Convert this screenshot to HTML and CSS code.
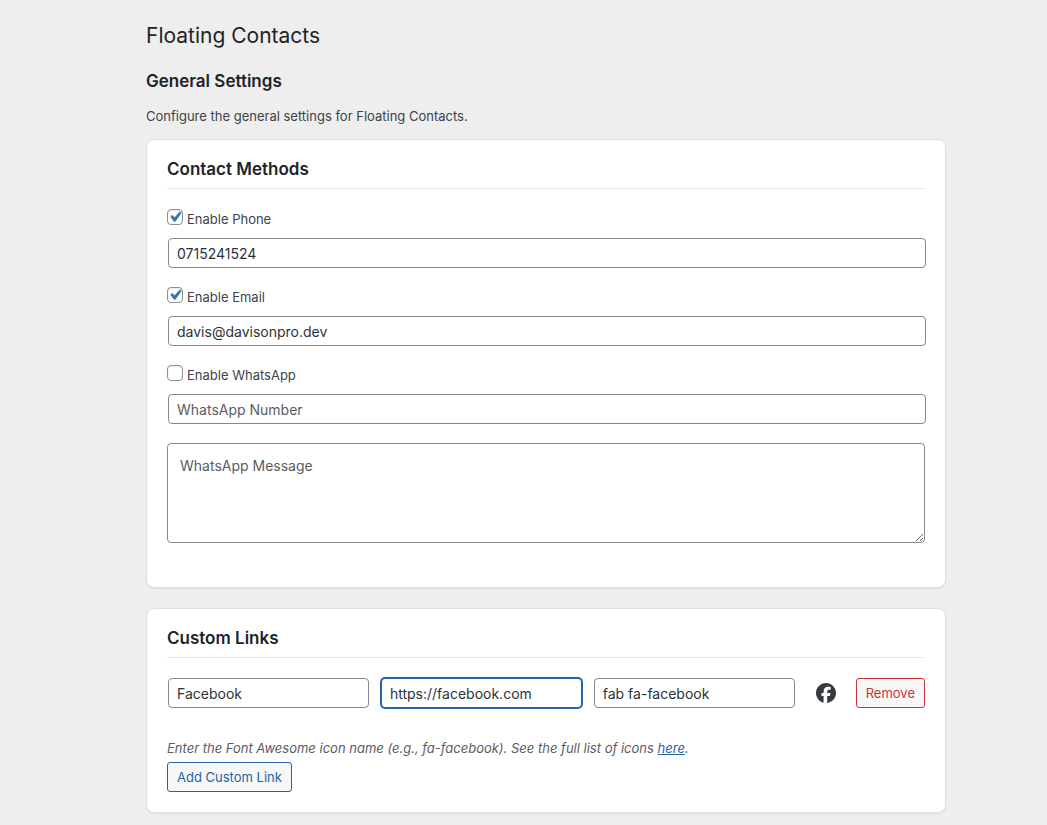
FILE: index.html
```html
<!DOCTYPE html>
<html lang="en">

<head>
  <meta charset="UTF-8" />
  <meta name="viewport" content="width=device-width, initial-scale=1.0" />
  <title>Floating Contacts</title>
  <link rel="stylesheet" href="styles.css">
</head>

<body>
  <main class="wrap">
    <h1>Floating Contacts</h1>
    <h2>General Settings</h2>
    <p class="intro">Configure the general settings for Floating Contacts.</p>

    <form>
      <section class="card contact-methods">
        <h2 class="card-title">Contact Methods</h2>

        <div class="field">
          <label class="toggle"><input type="checkbox" checked /> Enable Phone</label>
          <input type="text" class="text-input" value="0715241524" aria-label="Phone Number" />
        </div>

        <div class="field">
          <label class="toggle"><input type="checkbox" checked /> Enable Email</label>
          <input type="text" class="text-input" value="davis@davisonpro.dev" aria-label="Email Address" />
        </div>

        <div class="field">
          <label class="toggle"><input type="checkbox" /> Enable WhatsApp</label>
          <input type="text" class="text-input" placeholder="WhatsApp Number" aria-label="WhatsApp Number" />
        </div>

        <textarea class="message" placeholder="WhatsApp Message" aria-label="WhatsApp Message"></textarea>
      </section>

      <section class="card">
        <h2 class="card-title">Custom Links</h2>

        <div class="link-row">
          <input type="text" class="text-input" value="Facebook" aria-label="Link Name" />
          <input type="text" class="text-input active" value="https://facebook.com" aria-label="Link URL" />
          <input type="text" class="text-input" value="fab fa-facebook" aria-label="Link Icon" />
          <span class="link-icon">
            <svg viewBox="0 0 512 512" aria-hidden="true">
              <path d="M512 256C512 114.600 397.400 0 256 0S0 114.600 0 256C0 376 82.700 476.800 194.200 504.500V334.200H141.400V256h52.800V222.300c0-87.100 39.400-127.500 125-127.500c16.200 0 44.200 3.200 55.700 6.400V172c-6-.6-16.500-1-29.600-1c-42 0-58.200 15.900-58.200 57.200V256h83.600l-14.400 78.200H287V510.100C413.800 494.800 512 386.900 512 256z" />
            </svg>
          </span>
          <button type="button" class="button button-remove">Remove</button>
        </div>

        <p class="description">Enter the Font Awesome icon name (e.g., fa-facebook). See the full list of icons <a href="#icons">here</a>.</p>
        <button type="button" class="button">Add Custom Link</button>
      </section>
    </form>
  </main>
</body>

</html>
```
FILE: styles.css
```css
* {
  box-sizing: border-box;
}

body {
  margin: 0;
  padding: 12px 0 12px 45px;
  background: #eeeeee;
  color: #3c434a;
  font-family: Inter, "Liberation Sans", sans-serif;
  font-size: 13px;
  line-height: 20px;
}

.wrap {
  max-width: 800px;
  margin: 0 auto;
}

h1 {
  margin: 0;
  padding: 9px 0 4px;
  color: #1d2327;
  font-size: 21px;
  font-weight: 400;
  line-height: 30px;
}

h2 {
  margin: 16px 0 15px;
  color: #1d2327;
  font-size: 17px;
  font-weight: 600;
  line-height: 20px;
}

.intro {
  margin: 0 0 13px;
}

.card {
  margin-bottom: 20px;
  padding: 20px;
  background: #fff;
  border: 1px solid #dfe0e2;
  border-radius: 8px;
  box-shadow: 0 1px 2px rgba(0, 0, 0, 0.06);
}

.contact-methods {
  padding-bottom: 44px;
}

.card-title {
  margin: 0 0 20px;
  padding-bottom: 10px;
  border-bottom: 1px solid #e8e8e9;
  line-height: 18px;
}

.field {
  margin-bottom: 19px;
}

.toggle {
  display: flex;
  align-items: flex-end;
  gap: 4px;
  height: 20px;
  margin-bottom: 9px;
}

.toggle input {
  appearance: none;
  width: 16px;
  height: 16px;
  margin: 0 0 4px;
  background: #fff;
  border: 1px solid #8c8f94;
  border-radius: 4px;
  box-shadow: inset 0 1px 2px rgba(0, 0, 0, 0.1);
}

.toggle input:checked {
  background: #fff url("data:image/svg+xml,%3Csvg xmlns='http://www.w3.org/2000/svg' viewBox='0 0 20 20'%3E%3Cpath d='M14.830 4.890l1.340.94-5.810 8.380H9.020L5.780 9.670l1.340-1.250 2.570 2.400z' fill='%232e74b8' stroke='%232e74b8' stroke-width='.8'/%3E%3C/svg%3E") center / 20px no-repeat;
}

.text-input {
  display: block;
  width: 100%;
  height: 30px;
  margin: 0 1px;
  padding: 0 8px;
  background: #fff;
  border: 1px solid #85888d;
  border-radius: 4px;
  color: #2c3338;
  font-family: inherit;
  font-size: 14px;
}

.text-input.active {
  border-color: #2364a5;
  box-shadow: 0 0 0 1px #2364a5;
}

.text-input::placeholder,
.message::placeholder {
  color: #585d63;
}

.message {
  display: block;
  width: 100%;
  height: 100px;
  padding: 12px;
  border: 1px solid #85888d;
  border-radius: 4px;
  font-family: inherit;
  font-size: 14px;
  line-height: 20px;
  resize: vertical;
}

.link-row {
  display: flex;
  align-items: center;
  gap: 10px;
  margin-bottom: 30px;
}

.link-row .text-input {
  flex: 1;
  min-width: 0;
}

.link-icon {
  display: flex;
  justify-content: center;
  width: 40px;
}

.link-icon svg {
  width: 20px;
  height: 20px;
  fill: #353b42;
}

.description {
  margin: 0 0 4px;
  color: #585d63;
  font-style: italic;
}

a {
  color: #2364a5;
}

.button {
  height: 30px;
  padding: 0 9px;
  background: #f6f7f7;
  border: 1px solid #2364a5;
  border-radius: 3px;
  color: #2364a5;
  font-family: inherit;
  font-size: 13px;
  cursor: pointer;
}

.button-remove {
  border-color: #cd3237;
  color: #cd3237;
}
```
